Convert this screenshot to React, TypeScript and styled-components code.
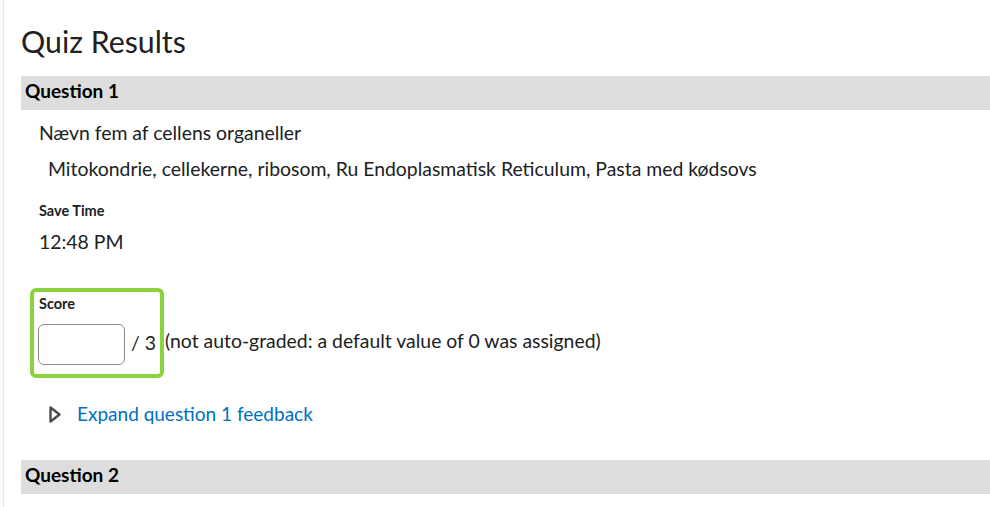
import styled, { createGlobalStyle } from 'styled-components';

const GlobalStyle = createGlobalStyle`
  html, body {
    margin: 0;
    padding: 0;
    background: #ffffff;
  }
  body {
    font-family: Lato, "Noto Sans", sans-serif;
    color: #202122;
  }
`;

const Page = styled.div`
  margin-left: 3px;
  border-left: 1px solid #e8e8e8;
  padding-left: 17px;
  min-height: 507px;
  box-sizing: border-box;
`;

const Title = styled.h1`
  margin: 0;
  padding-top: 21px;
  margin-bottom: 15px;
  font-size: 30.3px;
  font-weight: 400;
  line-height: 40px;
`;

const QuestionBar = styled.div`
  background: #dddddd;
  height: 34px;
  box-sizing: border-box;
  padding: 0 0 4px 4px;
  font-size: 19px;
  font-weight: 700;
  line-height: 30px;
  color: #000;
`;

const QuestionBody = styled.div`
  padding-left: 18px;
  padding-top: 9px;
  padding-bottom: 33px;
`;

const Prompt = styled.div`
  font-size: 19.4px;
  line-height: 27px;
`;

const Answer = styled.div`
  font-size: 19.4px;
  line-height: 27px;
  margin-top: 9px;
  padding-left: 9px;
`;

const FieldLabel = styled.div`
  font-size: 14.5px;
  font-weight: 700;
  line-height: 18px;
`;

const SaveLabel = styled(FieldLabel)`
  margin-top: 20px;
`;

const TimeValue = styled.div`
  font-size: 19.4px;
  line-height: 27px;
  margin-top: 8px;
`;

const ScoreRow = styled.div`
  display: flex;
  align-items: flex-end;
  margin-top: 33px;
  margin-left: -9px;
`;

const Highlight = styled.div`
  border: 4px solid #8cd23f;
  border-radius: 6px;
  padding: 3px 4px 9px 4px;
`;

const ScoreLabel = styled(FieldLabel)`
  padding-left: 1px;
`;

const ScoreLine = styled.div`
  display: flex;
  align-items: flex-end;
  margin-top: 11px;
  gap: 6px;
`;

const ScoreInput = styled.input`
  width: 87px;
  height: 41px;
  box-sizing: border-box;
  border: 1px solid #8a8c8e;
  border-radius: 6px;
  background: #fff;
  outline: none;
  font: inherit;
`;

const OutOf = styled.span`
  font-size: 19.4px;
  line-height: 27px;
  margin-bottom: 9px;
`;

const Note = styled.span`
  font-size: 19.4px;
  line-height: 27px;
  margin-left: 1px;
  margin-bottom: 24px;
`;

const ExpandRow = styled.div`
  display: flex;
  align-items: center;
  margin-top: 22px;
  padding-left: 9px;
`;

const Caret = styled.svg`
  width: 14px;
  height: 19px;
  margin-right: 15px;
  margin-top: 1px;
`;

const ExpandLink = styled.a`
  font-size: 19px;
  line-height: 27px;
  color: #006fbf;
  text-decoration: none;
`;

const App = () => {
  return (
    <>
      <GlobalStyle />
      <Page>
        <Title>Quiz Results</Title>
        <QuestionBar>Question 1</QuestionBar>
        <QuestionBody>
          <Prompt>Nævn fem af cellens organeller</Prompt>
          <Answer>
            Mitokondrie, cellekerne, ribosom, Ru Endoplasmatisk Reticulum, Pasta med kødsovs
          </Answer>
          <SaveLabel>Save Time</SaveLabel>
          <TimeValue>12:48 PM</TimeValue>
          <ScoreRow>
            <Highlight>
              <ScoreLabel>Score</ScoreLabel>
              <ScoreLine>
                <ScoreInput aria-label="Score" />
                <OutOf>/ 3</OutOf>
              </ScoreLine>
            </Highlight>
            <Note>(not auto-graded: a default value of 0 was assigned)</Note>
          </ScoreRow>
          <ExpandRow>
            <Caret viewBox="0 0 14 19">
              <path
                d="M2.5 2.5 L11.5 9.5 L2.5 16.5 Z"
                fill="none"
                stroke="#494c4e"
                strokeWidth="2.4"
                strokeLinejoin="round"
              />
            </Caret>
            <ExpandLink href="#">Expand question 1 feedback</ExpandLink>
          </ExpandRow>
        </QuestionBody>
        <QuestionBar>Question 2</QuestionBar>
      </Page>
    </>
  );
};

export default App;
